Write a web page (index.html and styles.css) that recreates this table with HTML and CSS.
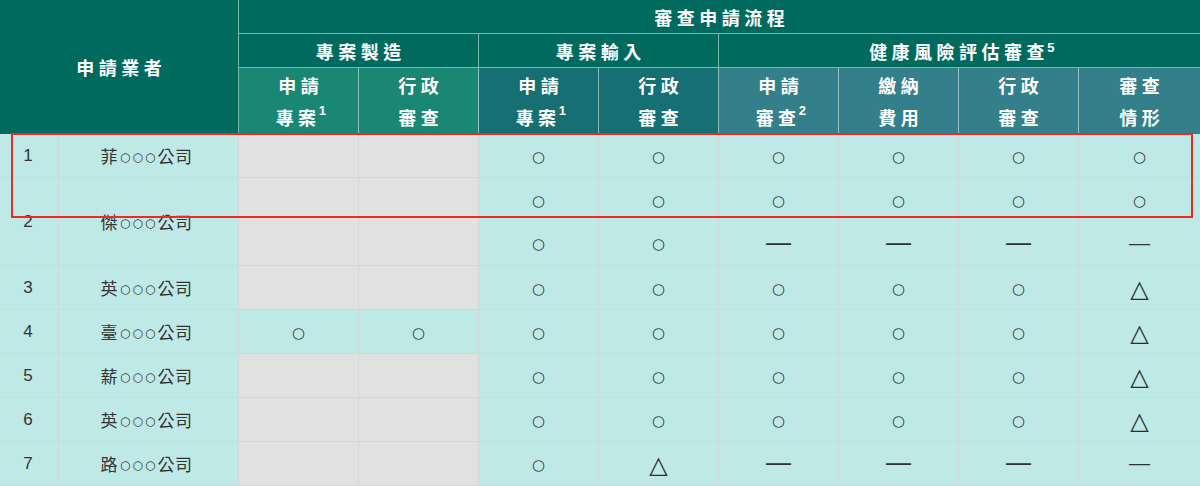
FILE: index.html
```html
<!DOCTYPE html>
<html lang="zh-Hant">
<head>
<meta charset="utf-8">
<title>審查申請流程</title>
<link rel="stylesheet" href="styles.css">
</head>
<body>
<div class="wrap">
  <div class="tbl">
    <div class="h h-top c-org">申請業者</div>
    <div class="h h-top c-flow">審查申請流程</div>
    <div class="h h-top c-g1">專案製造</div>
    <div class="h h-top c-g2">專案輸入</div>
    <div class="h h-top c-g3 last">健康風險評估審查<sup>5</sup></div>

    <div class="h h-sub s1"><span>申請</span><span>專案<sup>1</sup></span></div>
    <div class="h h-sub s1"><span>行政</span><span>審查</span></div>
    <div class="h h-sub s2"><span>申請</span><span>專案<sup>1</sup></span></div>
    <div class="h h-sub s2"><span>行政</span><span>審查</span></div>
    <div class="h h-sub s3"><span>申請</span><span>審查<sup>2</sup></span></div>
    <div class="h h-sub s3"><span>繳納</span><span>費用</span></div>
    <div class="h h-sub s3"><span>行政</span><span>審查</span></div>
    <div class="h h-sub s3 last"><span>審查</span><span>情形</span></div>

    <!-- row 1 -->
    <div class="d num">1</div>
    <div class="d name">菲<span class="o">○○○</span>公司</div>
    <div class="d gray"></div>
    <div class="d gray"></div>
    <div class="d"><span class="ci">○</span></div>
    <div class="d"><span class="ci">○</span></div>
    <div class="d"><span class="ci">○</span></div>
    <div class="d"><span class="ci">○</span></div>
    <div class="d"><span class="ci">○</span></div>
    <div class="d last"><span class="ci">○</span></div>

    <!-- row 2 -->
    <div class="d num span2">2</div>
    <div class="d name span2">傑<span class="o">○○○</span>公司</div>
    <div class="d gray span2"></div>
    <div class="d gray span2"></div>
    <div class="d span2 stack"><span class="slot"><span class="ci">○</span></span><span class="slot"><span class="ci">○</span></span></div>
    <div class="d span2 stack"><span class="slot"><span class="ci">○</span></span><span class="slot"><span class="ci">○</span></span></div>
    <div class="d span2 stack"><span class="slot"><span class="ci">○</span></span><span class="slot"><span class="da">—</span></span></div>
    <div class="d span2 stack"><span class="slot"><span class="ci">○</span></span><span class="slot"><span class="da">—</span></span></div>
    <div class="d span2 stack"><span class="slot"><span class="ci">○</span></span><span class="slot"><span class="da">—</span></span></div>
    <div class="d span2 stack last"><span class="slot"><span class="ci">○</span></span><span class="slot"><span class="da short">—</span></span></div>

    <!-- row 3 -->
    <div class="d num">3</div>
    <div class="d name">英<span class="o">○○○</span>公司</div>
    <div class="d gray"></div>
    <div class="d gray"></div>
    <div class="d"><span class="ci">○</span></div>
    <div class="d"><span class="ci">○</span></div>
    <div class="d"><span class="ci">○</span></div>
    <div class="d"><span class="ci">○</span></div>
    <div class="d"><span class="ci">○</span></div>
    <div class="d last"><span class="tr">△</span></div>

    <!-- row 4 -->
    <div class="d num">4</div>
    <div class="d name">臺<span class="o">○○○</span>公司</div>
    <div class="d"><span class="ci">○</span></div>
    <div class="d"><span class="ci">○</span></div>
    <div class="d"><span class="ci">○</span></div>
    <div class="d"><span class="ci">○</span></div>
    <div class="d"><span class="ci">○</span></div>
    <div class="d"><span class="ci">○</span></div>
    <div class="d"><span class="ci">○</span></div>
    <div class="d last"><span class="tr">△</span></div>

    <!-- row 5 -->
    <div class="d num">5</div>
    <div class="d name">薪<span class="o">○○○</span>公司</div>
    <div class="d gray"></div>
    <div class="d gray"></div>
    <div class="d"><span class="ci">○</span></div>
    <div class="d"><span class="ci">○</span></div>
    <div class="d"><span class="ci">○</span></div>
    <div class="d"><span class="ci">○</span></div>
    <div class="d"><span class="ci">○</span></div>
    <div class="d last"><span class="tr">△</span></div>

    <!-- row 6 -->
    <div class="d num">6</div>
    <div class="d name">英<span class="o">○○○</span>公司</div>
    <div class="d gray"></div>
    <div class="d gray"></div>
    <div class="d"><span class="ci">○</span></div>
    <div class="d"><span class="ci">○</span></div>
    <div class="d"><span class="ci">○</span></div>
    <div class="d"><span class="ci">○</span></div>
    <div class="d"><span class="ci">○</span></div>
    <div class="d last"><span class="tr">△</span></div>

    <!-- row 7 -->
    <div class="d num">7</div>
    <div class="d name">路<span class="o">○○○</span>公司</div>
    <div class="d gray"></div>
    <div class="d gray"></div>
    <div class="d"><span class="ci">○</span></div>
    <div class="d"><span class="tr">△</span></div>
    <div class="d"><span class="da">—</span></div>
    <div class="d"><span class="da">—</span></div>
    <div class="d"><span class="da">—</span></div>
    <div class="d last"><span class="da short">—</span></div>
  </div>
  <div class="highlight"></div>
</div>
</body>
</html>
```

FILE: styles.css
```css
* { box-sizing: border-box; }
html, body { margin: 0; padding: 0; background: #ffffff; }
body {
  font-family: "Liberation Sans", "Noto Sans CJK TC", sans-serif;
  color: #333333;
}
.wrap { position: relative; width: 1200px; height: 486px; overflow: hidden; }

.tbl {
  display: grid;
  grid-template-columns: 59px 180px repeat(7, 120px) 121px;
  grid-template-rows: 34px 34px 66px repeat(8, 44px);
  width: 1200px;
}

.h {
  display: flex;
  align-items: center;
  justify-content: center;
  color: #ffffff;
  font-family: "Noto Sans CJK TC", sans-serif;
  font-weight: 700;
  font-size: 18px;
  letter-spacing: 4.5px;
  padding-left: 4.5px;
  background: #016a5f;
  border-right: 1px solid rgba(255, 255, 255, 0.5);
  border-bottom: 1px solid rgba(255, 255, 255, 0.5);
}
.h.last { border-right: none; }
.h sup {
  font-family: "Liberation Sans", sans-serif;
  font-weight: 700;
  font-size: 13px;
  line-height: 1;
  letter-spacing: 0;
  position: relative;
  top: -3px;
  margin-left: -2px;
}

.c-org { grid-column: 1 / 3; grid-row: 1 / 4; border-bottom: none; }
.c-flow { grid-column: 3 / 11; grid-row: 1; border-right: none; }
.c-g1 { grid-column: 3 / 5; grid-row: 2; }
.c-g2 { grid-column: 5 / 7; grid-row: 2; }
.c-g3 { grid-column: 7 / 11; grid-row: 2; }

.h-sub {
  grid-row: 3;
  flex-direction: column;
  line-height: 32px;
  border-bottom: none;
  padding-top: 0;
}
.h-sub span { display: block; }
.s1 { background: #1a8775; }
.s2 { background: #166f72; }
.s3 { background: #33808a; }

.d {
  display: flex;
  align-items: center;
  justify-content: center;
  background: #bfe9e6;
  border-right: 1px solid #d2d7d7;
  border-bottom: 1px solid #d2d7d7;
  font-size: 17px;
}
.d.last { border-right: none; }
.d.gray { background: #e1e1e1; }
.d.span2 { grid-row: span 2; }
.d.num { font-size: 17px; padding-right: 2px; }
.d.name {
  font-family: "Noto Sans CJK TC", sans-serif;
  font-size: 17px;
  letter-spacing: 0.5px;
  padding-right: 4px;
}
.o {
  font-family: "DejaVu Sans", sans-serif;
  font-size: 12px;
  letter-spacing: 2px;
  margin: 0 0 0 2px;
  position: relative;
  top: 1px;
}

.stack { flex-direction: column; }
.slot {
  height: 44px;
  display: flex;
  align-items: center;
  justify-content: center;
}

.ci {
  font-family: "DejaVu Sans", sans-serif;
  font-size: 15px;
  color: #2f3333;
  position: relative;
  top: 1px;
}
.tr {
  font-family: "DejaVu Sans", sans-serif;
  font-size: 24px;
  color: #2a2e2e;
  position: relative;
  top: 1px;
}
.da {
  font-family: "Liberation Sans", sans-serif;
  font-weight: 400;
  font-size: 25px;
  line-height: 1;
  color: #2f3333;
  position: relative;
  top: -1px;
}
.da.short { font-size: 21px; }

.highlight {
  position: absolute;
  left: 11px;
  top: 133px;
  width: 1182px;
  height: 85px;
  border: 2px solid #ee2a24;
  pointer-events: none;
}
```
